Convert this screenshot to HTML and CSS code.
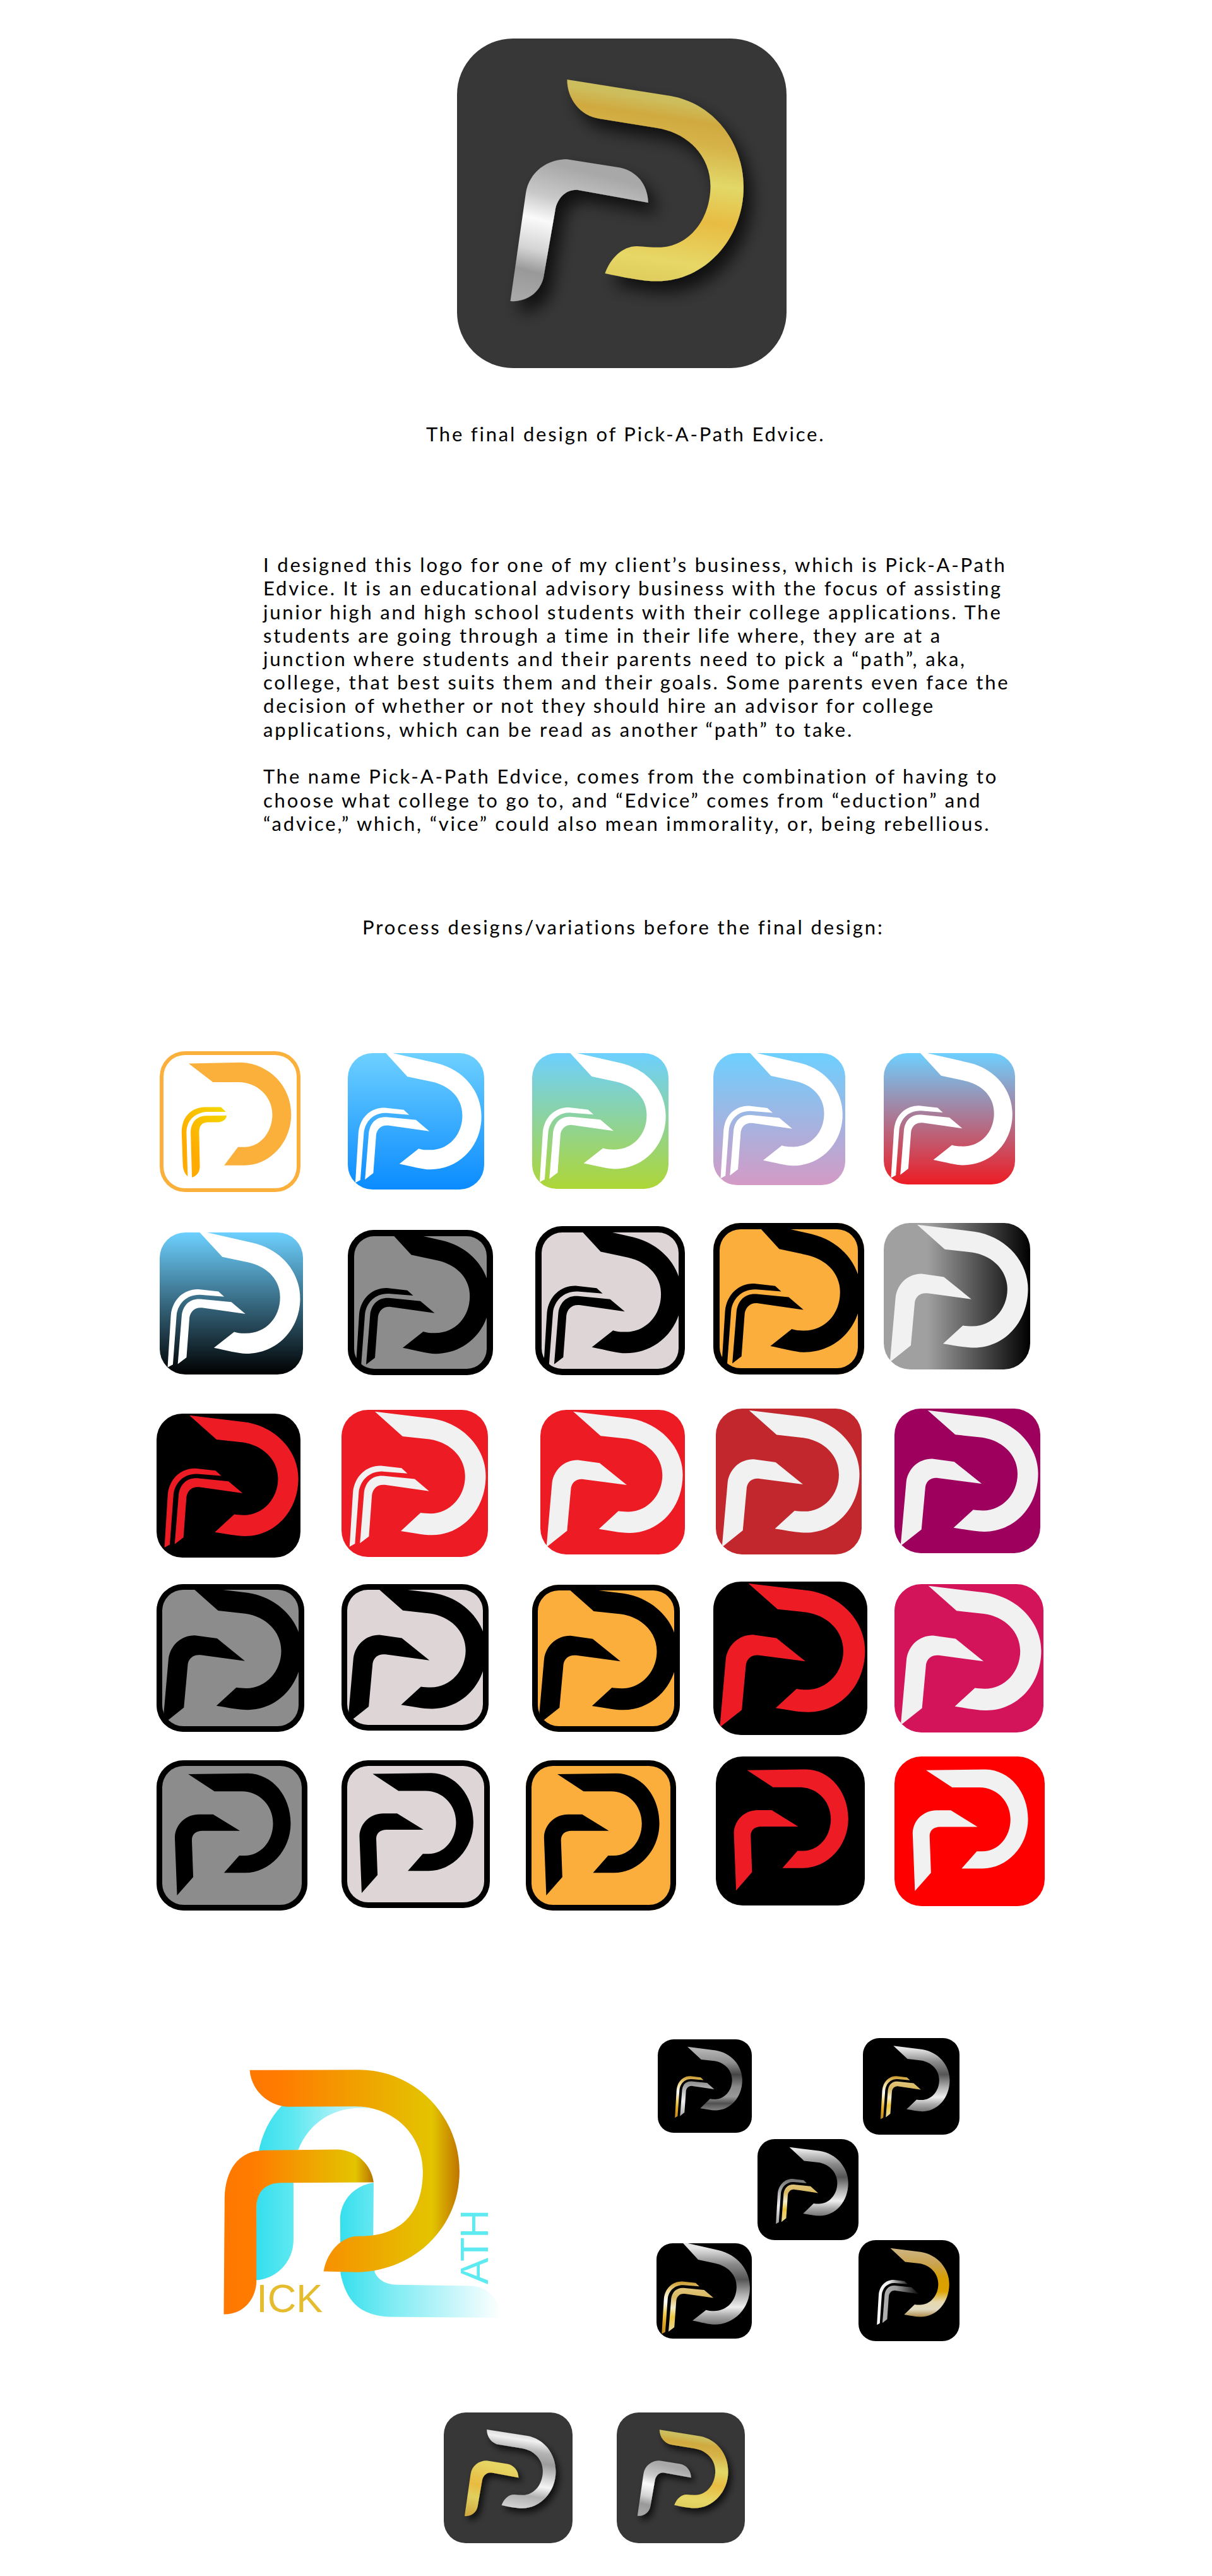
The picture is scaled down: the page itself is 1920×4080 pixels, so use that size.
FILE: index.html
```html
<!DOCTYPE html>
<html lang="en">
<head>
<meta charset="utf-8">
<title>Pick-A-Path Edvice</title>
<link rel="stylesheet" href="styles.css">
</head>
<body>
<svg class="defs" aria-hidden="true">
  <defs>
    <path id="mD" d="M571 250 L1000 318 C1180 350 1302 510 1302 695 C1302 910 1140 1085 945 1085 C880 1085 800 1068 728 1053 C750 990 800 940 860 940 C890 942 920 945 950 945 C1075 945 1165 830 1165 690 C1165 570 1075 470 940 450 L705 412 C625 400 571 330 571 250 Z"/>
    <path id="mR" d="M336 1168 L400 720 C415 630 490 580 570 580 L790 615 C860 630 905 685 907 760 L620 708 C570 700 530 740 522 790 L475 1060 C465 1125 410 1172 336 1168 Z"/>
    <path id="dA" d="M27 -1 L33 0 L65 7.3 C85 12 98 28 98 46.5 C98 68 82 85.3 60.3 85.3 C55 85.3 47 83 37.8 81.2 L52 70 C55 71 57 71 60.3 71 C74 71 84 60 84 45.7 C84 33 75 24 61.5 21 L43.7 17.2 Z"/>
    <path id="sA" d="M5.5 95 L7.8 58 C9 47 17 39.8 27 40 L41 41.6 L45 45.2 L28.4 43.9 C19 43.5 12.8 50 11.8 58 L9.2 93 Z M12.6 92.7 L15.4 58 C16.5 51 21 46.5 28.4 46.9 L50 49 L59.8 57.3 L29.6 53 C24 52.5 21.5 56 20.8 59.7 L18.7 88 Z"/>
    <path id="sO" d="M5.5 95 L7.8 58 C9 47 17 39.8 27 40 L41 41.6 L45 45.2 L28.4 43.9 C19 43.5 12.8 50 11.8 58 L9.2 93 Z"/>
    <path id="sI" d="M12.6 92.7 L15.4 58 C16.5 51 21 46.5 28.4 46.9 L50 49 L59.8 57.3 L29.6 53 C24 52.5 21.5 56 20.8 59.7 L18.7 88 Z"/>
    <path id="dC" d="M22.8 1.2 L61.8 5.9 C83 9 98.5 26 98.5 45 C98.5 68 82 85.1 61.8 85.1 C55 85.1 48 83.5 40.5 82.4 L54 70 C56 70.3 58 70.5 60.8 70.5 C74 70.5 84.4 59 84.4 45.2 C84.4 32 74 22 60 20 L41.7 18 Z"/>
    <path id="rC" d="M4.2 95 L8.1 50.4 C9.5 41 17 34.5 26 34.7 L41 36.8 L59.8 52 L29.8 48 C25 47.5 22 50 21.2 54 L18.5 83.6 Z"/>
    <path id="dD" d="M21 9.2 L60.5 8.7 C77 9 88.9 24 88.9 42 C88.9 60 75 74.9 58.6 74.9 L44.7 74.9 L54.8 63.4 L58.6 63.4 C69 63.4 77.2 54 77.2 42 C77.2 30 68 20.7 56.7 20.7 L38.4 20.7 Z"/>
    <path id="rD" d="M13.6 89.9 L12.1 51.3 C12.5 42 20 36 28 36 L37.5 36 L55.3 47 L30.3 47 C26.5 47 23.5 49 23.4 53 L24.3 77.7 Z"/>
    <path id="dO" d="M20.6 8.8 L58 8 C78 9 93.4 25 93.4 44.8 C93.4 65 78 81 60.6 81 L45.8 81 L55.6 68 L60.6 68 C71 68 80 58 80 44.8 C80 32 69 22 56 22 L37.8 22 Z"/>
    <path id="sS" d="M19.9 89 C17 86 16.5 83 16.4 80 L15.6 57.6 C15.6 47 22 39.7 33 39.7 L43.5 39.7 L47 43 L33 43 C24 44 19 50 19 57.6 L19.9 89 Z M22.9 89.6 C26 89 28.5 86 28.5 82 L28 57.6 C28 53 30 50.4 34.3 50.4 L41 50.4 C45 50.4 47.5 48 47.5 45.6 L33 45.9 C26 46 22 51 22 57.6 Z"/>

    <linearGradient id="sYellow" gradientUnits="userSpaceOnUse" x1="48" y1="39" x2="16" y2="62">
      <stop offset="0" stop-color="#f2dc00"/><stop offset="1" stop-color="#ffab00"/>
    </linearGradient>
    <linearGradient id="gGold" gradientUnits="userSpaceOnUse" x1="1000" y1="250" x2="877" y2="1068">
      <stop offset="0" stop-color="#cbc163"/><stop offset=".11" stop-color="#cdbd5c"/><stop offset=".19" stop-color="#d0aa40"/><stop offset=".3" stop-color="#d6b349"/><stop offset=".49" stop-color="#e2d868"/><stop offset=".68" stop-color="#e8bc42"/><stop offset=".9" stop-color="#e6d767"/><stop offset="1" stop-color="#e0cf5f"/>
    </linearGradient>
    <linearGradient id="gSilverR" gradientUnits="userSpaceOnUse" x1="450" y1="580" x2="311" y2="1135">
      <stop offset="0" stop-color="#a8a8a8"/><stop offset=".24" stop-color="#c8c8c8"/><stop offset=".42" stop-color="#fafafa"/><stop offset=".64" stop-color="#d4d4d4"/><stop offset=".8" stop-color="#999"/><stop offset="1" stop-color="#a8a8a8"/>
    </linearGradient>
    <linearGradient id="gSilverD" gradientUnits="userSpaceOnUse" x1="1000" y1="250" x2="877" y2="1068">
      <stop offset="0" stop-color="#c8c8c8"/><stop offset=".14" stop-color="#f0f0f0"/><stop offset=".27" stop-color="#b4b4b4"/><stop offset=".41" stop-color="#9c9c9c"/><stop offset=".7" stop-color="#f5f5f5"/><stop offset=".84" stop-color="#b0b0b0"/><stop offset="1" stop-color="#d0d0d0"/>
    </linearGradient>
    <linearGradient id="gGoldR" gradientUnits="userSpaceOnUse" x1="450" y1="580" x2="311" y2="1135">
      <stop offset="0" stop-color="#e6d564"/><stop offset=".42" stop-color="#e8bb40"/><stop offset=".66" stop-color="#e0d060"/><stop offset="1" stop-color="#d0a93f"/>
    </linearGradient>
    <filter id="sh" filterUnits="userSpaceOnUse" x="115" y="80" width="1365" height="1365">
      <feDropShadow dx="34" dy="46" stdDeviation="34" flood-color="#000" flood-opacity=".72"/>
    </filter>

    <linearGradient id="mLight" gradientUnits="userSpaceOnUse" x1="0" y1="0" x2="0" y2="100">
      <stop offset=".05" stop-color="#e6e6e6"/><stop offset=".22" stop-color="#8a8a8a"/><stop offset=".38" stop-color="#555"/><stop offset=".54" stop-color="#b0b0b0"/><stop offset=".67" stop-color="#eee"/><stop offset=".76" stop-color="#aaa"/><stop offset=".86" stop-color="#707070"/>
    </linearGradient>
    <linearGradient id="mDark" gradientUnits="userSpaceOnUse" x1="0" y1="0" x2="0" y2="100">
      <stop offset=".05" stop-color="#b4b4b4"/><stop offset=".22" stop-color="#8f8f8f"/><stop offset=".38" stop-color="#444"/><stop offset=".54" stop-color="#8a8a8a"/><stop offset=".67" stop-color="#999"/><stop offset=".76" stop-color="#505050"/><stop offset=".86" stop-color="#888"/>
    </linearGradient>
    <linearGradient id="mAmber" gradientUnits="userSpaceOnUse" x1="0" y1="0" x2="0" y2="100">
      <stop offset=".05" stop-color="#cdb27a"/><stop offset=".22" stop-color="#c9a24c"/><stop offset=".38" stop-color="#d99e00"/><stop offset=".54" stop-color="#dca200"/><stop offset=".67" stop-color="#e6d9b0"/><stop offset=".76" stop-color="#e2dac0"/><stop offset=".86" stop-color="#a88440"/>
    </linearGradient>
    <linearGradient id="sGold" gradientUnits="userSpaceOnUse" x1="0" y1="40" x2="0" y2="95">
      <stop offset="0" stop-color="#c8982a"/><stop offset=".18" stop-color="#f0d890"/><stop offset=".38" stop-color="#fff"/><stop offset=".6" stop-color="#f2d060"/><stop offset=".78" stop-color="#e0a820"/><stop offset="1" stop-color="#c08820"/>
    </linearGradient>
    <linearGradient id="sPale" gradientUnits="userSpaceOnUse" x1="0" y1="40" x2="0" y2="95">
      <stop offset="0" stop-color="#e6cf90"/><stop offset=".3" stop-color="#d9b860"/><stop offset=".5" stop-color="#f5eecc"/><stop offset=".68" stop-color="#efc840"/><stop offset="1" stop-color="#e8dcb0"/>
    </linearGradient>
    <linearGradient id="sGray" gradientUnits="userSpaceOnUse" x1="0" y1="40" x2="0" y2="95">
      <stop offset="0" stop-color="#707070"/><stop offset=".4" stop-color="#c8c8c8"/><stop offset=".6" stop-color="#f0f0f0"/><stop offset="1" stop-color="#a0a0a0"/>
    </linearGradient>
    <linearGradient id="sFadeA" gradientUnits="userSpaceOnUse" x1="5" y1="0" x2="45" y2="0">
      <stop offset="0" stop-color="#fff"/><stop offset=".4" stop-color="#eee"/><stop offset="1" stop-color="#222"/>
    </linearGradient>
    <linearGradient id="sFadeB" gradientUnits="userSpaceOnUse" x1="12" y1="0" x2="60" y2="0">
      <stop offset="0" stop-color="#b4b4b4"/><stop offset=".4" stop-color="#999"/><stop offset="1" stop-color="#000"/>
    </linearGradient>

    <linearGradient id="bigD" gradientUnits="userSpaceOnUse" x1="228" y1="0" x2="1230" y2="0">
      <stop offset="0" stop-color="#ff7800"/><stop offset=".15" stop-color="#ff7c00"/><stop offset=".87" stop-color="#e3c400"/><stop offset="1" stop-color="#bf7400"/>
    </linearGradient>
    <linearGradient id="bigR" gradientUnits="userSpaceOnUse" x1="104" y1="0" x2="820" y2="0">
      <stop offset="0" stop-color="#ff7800"/><stop offset=".2" stop-color="#ff7c00"/><stop offset=".88" stop-color="#e3c400"/><stop offset="1" stop-color="#b87000"/>
    </linearGradient>
    <linearGradient id="bigC1" gradientUnits="userSpaceOnUse" x1="260" y1="0" x2="900" y2="0">
      <stop offset="0" stop-color="#35dfee"/><stop offset=".27" stop-color="#5ee8f1"/><stop offset=".6" stop-color="#a8f1f7"/><stop offset="1" stop-color="#e8fbfd"/>
    </linearGradient>
    <linearGradient id="bigC2" gradientUnits="userSpaceOnUse" x1="660" y1="0" x2="1430" y2="0">
      <stop offset="0" stop-color="#35dfee"/><stop offset=".3" stop-color="#7aebf3"/><stop offset="1" stop-color="#fff"/>
    </linearGradient>
  </defs>
</svg>

<main class="page">
  <section class="hero">
    <svg class="metal m-main" viewBox="115 80 1365 1365">
      <use href="#mD" fill="url(#gGold)" filter="url(#sh)"/>
      <use href="#mR" fill="url(#gSilverR)" filter="url(#sh)"/>
    </svg>
  </section>

  <p class="line caption">The final design of Pick-A-Path Edvice.</p>

  <section class="story">
    <p class="para">
      <span class="line">I designed this logo for one of my client’s business, which is Pick-A-Path</span>
      <span class="line">Edvice. It is an educational advisory business with the focus of assisting</span>
      <span class="line">junior high and high school students with their college applications. The</span>
      <span class="line">students are going through a time in their life where, they are at a</span>
      <span class="line">junction where students and their parents need to pick a “path”, aka,</span>
      <span class="line">college, that best suits them and their goals. Some parents even face the</span>
      <span class="line">decision of whether or not they should hire an advisor for college</span>
      <span class="line">applications, which can be read as another “path” to take.</span>
    </p>
    <p class="para para-2">
      <span class="line">The name Pick-A-Path Edvice, comes from the combination of having to</span>
      <span class="line">choose what college to go to, and “Edvice” comes from “eduction” and</span>
      <span class="line">“advice,” which, “vice” could also mean immorality, or, being rebellious.</span>
    </p>
  </section>

  <p class="line process">Process designs/variations before the final design:</p>

  <section class="gallery">
    <div class="row row-1">
      <svg class="icon a11 bg-ring" viewBox="0 0 100 100" preserveAspectRatio="none"><use href="#dO" class="f-amber"/><use href="#sS" fill="url(#sYellow)"/></svg>
      <svg class="icon a12 bg-blue" viewBox="0 0 100 100" preserveAspectRatio="none"><use href="#dA" class="f-white"/><use href="#sA" class="f-white"/></svg>
      <svg class="icon a13 bg-green" viewBox="0 0 100 100" preserveAspectRatio="none"><use href="#dA" class="f-white"/><use href="#sA" class="f-white"/></svg>
      <svg class="icon a14 bg-lilac" viewBox="0 0 100 100" preserveAspectRatio="none"><use href="#dA" class="f-white"/><use href="#sA" class="f-white"/></svg>
      <svg class="icon a15 bg-sunset" viewBox="0 0 100 100" preserveAspectRatio="none"><use href="#dA" class="f-white"/><use href="#sA" class="f-white"/></svg>
    </div>
    <div class="row row-2">
      <svg class="icon a21 bg-night" viewBox="0 0 100 100" preserveAspectRatio="none"><use href="#dA" class="f-white"/><use href="#sA" class="f-white"/></svg>
      <svg class="icon a22 bg-gray ring-10" viewBox="0 0 100 100" preserveAspectRatio="none"><use href="#dA" class="f-black"/><use href="#sA" class="f-black"/></svg>
      <svg class="icon a23 bg-stone ring-10" viewBox="0 0 100 100" preserveAspectRatio="none"><use href="#dA" class="f-black"/><use href="#sA" class="f-black"/></svg>
      <svg class="icon a24 bg-orange ring-10" viewBox="0 0 100 100" preserveAspectRatio="none"><use href="#dA" class="f-black"/><use href="#sA" class="f-black"/></svg>
      <svg class="icon a25 bg-fade" viewBox="0 0 100 100" preserveAspectRatio="none"><use href="#dC" class="f-soft"/><use href="#rC" class="f-soft"/></svg>
    </div>
    <div class="row row-3">
      <svg class="icon a31 bg-black" viewBox="0 0 100 100" preserveAspectRatio="none"><use href="#dC" class="f-red"/><use href="#sA" y="-2" class="f-red"/></svg>
      <svg class="icon a32 bg-red" viewBox="0 0 100 100" preserveAspectRatio="none"><use href="#dC" class="f-soft"/><use href="#sA" y="-2" class="f-soft"/></svg>
      <svg class="icon a33 bg-red" viewBox="0 0 100 100" preserveAspectRatio="none"><use href="#dC" class="f-soft"/><use href="#rC" class="f-soft"/></svg>
      <svg class="icon a34 bg-brick" viewBox="0 0 100 100" preserveAspectRatio="none"><use href="#dC" class="f-soft"/><use href="#rC" class="f-soft"/></svg>
      <svg class="icon a35 bg-plum" viewBox="0 0 100 100" preserveAspectRatio="none"><use href="#dC" class="f-soft"/><use href="#rC" class="f-soft"/></svg>
    </div>
    <div class="row row-4">
      <svg class="icon a41 bg-gray ring-9" viewBox="0 0 100 100" preserveAspectRatio="none"><use href="#dC" class="f-black"/><use href="#rC" class="f-black"/></svg>
      <svg class="icon a42 bg-stone ring-9" viewBox="0 0 100 100" preserveAspectRatio="none"><use href="#dC" class="f-black"/><use href="#rC" class="f-black"/></svg>
      <svg class="icon a43 bg-orange ring-9" viewBox="0 0 100 100" preserveAspectRatio="none"><use href="#dC" class="f-black"/><use href="#rC" class="f-black"/></svg>
      <svg class="icon a44 bg-black" viewBox="0 0 100 100" preserveAspectRatio="none"><use href="#dC" class="f-red"/><use href="#rC" class="f-red"/></svg>
      <svg class="icon a45 bg-rose" viewBox="0 0 100 100" preserveAspectRatio="none"><use href="#dC" class="f-soft"/><use href="#rC" class="f-soft"/></svg>
    </div>
    <div class="row row-5">
      <svg class="icon a51 bg-gray ring-9" viewBox="0 0 100 100" preserveAspectRatio="none"><use href="#dD" class="f-black"/><use href="#rD" class="f-black"/></svg>
      <svg class="icon a52 bg-stone ring-9" viewBox="0 0 100 100" preserveAspectRatio="none"><use href="#dD" class="f-black"/><use href="#rD" class="f-black"/></svg>
      <svg class="icon a53 bg-orange ring-9" viewBox="0 0 100 100" preserveAspectRatio="none"><use href="#dD" class="f-black"/><use href="#rD" class="f-black"/></svg>
      <svg class="icon a54 bg-black" viewBox="0 0 100 100" preserveAspectRatio="none"><use href="#dD" class="f-red"/><use href="#rD" class="f-red"/></svg>
      <svg class="icon a55 bg-pure" viewBox="0 0 100 100" preserveAspectRatio="none"><use href="#dD" class="f-soft"/><use href="#rD" class="f-soft"/></svg>
    </div>
  </section>

  <section class="lower">
    <svg class="woven" viewBox="0 0 1568 1387">
      <path fill="url(#bigC1)" d="M380 288 C325 345 285 425 270 510 L260 760 L258 1120 C350 1115 435 1040 437 930 L437 655 L437 500 L460 497 C510 370 620 300 750 298 C800 298 850 305 900 315 L740 288 Z"/>
      <path fill="url(#bigC2)" d="M820 655 C730 665 660 740 660 830 L662 1090 C690 1220 750 1285 890 1295 L1430 1300 C1425 1210 1360 1150 1290 1147 L930 1142 C870 1140 835 1110 825 1080 L818 905 Z"/>
      <path fill="url(#bigR)" d="M104 1283 L108 730 C110 600 170 500 300 500 L650 496 C740 500 810 570 820 653 L380 655 C300 655 262 700 260 770 L260 1130 C255 1220 190 1285 104 1283 Z"/>
      <path fill="url(#bigD)" d="M228 117 L750 115 C1020 115 1230 340 1230 600 C1230 870 1010 1082 730 1082 L581 1078 C595 990 660 915 740 910 C960 915 1055 790 1055 600 C1055 430 920 290 730 290 L410 292 C310 285 235 210 228 117 Z"/>
      <text class="word word-ick" x="260" y="1272">ICK</text>
      <text class="word word-ath" transform="translate(1365 1140) rotate(-90)">ATH</text>
    </svg>
    <div class="cluster">
      <div class="c-row c-row-1">
        <svg class="tile t-a" viewBox="0 0 100 100" preserveAspectRatio="none"><g transform="translate(14 7) scale(.77 .81)"><use href="#dC" fill="url(#mDark)"/><use href="#sO" fill="url(#sGold)"/><use href="#sI" fill="url(#sGray)"/></g></svg>
        <svg class="tile t-b" viewBox="0 0 100 100" preserveAspectRatio="none"><g transform="translate(14 7) scale(.77 .81)"><use href="#dC" fill="url(#mLight)"/><use href="#sO" fill="url(#sGold)"/><use href="#sI" fill="url(#sPale)"/></g></svg>
      </div>
      <div class="c-row c-row-2">
        <svg class="tile t-c" viewBox="0 0 100 100" preserveAspectRatio="none"><g transform="translate(14 7) scale(.77 .81)"><use href="#dC" fill="url(#mLight)"/><use href="#sO" fill="url(#sGray)"/><use href="#sI" fill="url(#sPale)"/></g></svg>
      </div>
      <div class="c-row c-row-3">
        <svg class="tile t-d" viewBox="0 0 100 100" preserveAspectRatio="none"><use href="#dA" fill="url(#mLight)"/><use href="#sO" fill="url(#sGold)"/><use href="#sI" fill="url(#sPale)"/></svg>
        <svg class="tile t-e" viewBox="0 0 100 100" preserveAspectRatio="none"><g transform="translate(14 7) scale(.77 .81)"><use href="#dC" fill="url(#mAmber)"/><use href="#sO" fill="url(#sFadeA)"/><use href="#sI" fill="url(#sFadeB)"/></g></svg>
      </div>
    </div>
  </section>

  <section class="finals">
    <svg class="metal m-f" viewBox="115 80 1365 1365">
      <use href="#mD" fill="url(#gSilverD)" filter="url(#sh)"/>
      <use href="#mR" fill="url(#gGoldR)" filter="url(#sh)"/>
    </svg>
    <svg class="metal m-g" viewBox="115 80 1365 1365">
      <use href="#mD" fill="url(#gGold)" filter="url(#sh)"/>
      <use href="#mR" fill="url(#gSilverR)" filter="url(#sh)"/>
    </svg>
  </section>
</main>
</body>
</html>
```

FILE: styles.css
```css
* { box-sizing: border-box; }
html, body { margin: 0; padding: 0; background: #fff; }
body { font-family: "Lato", "Open Sans", sans-serif; color: #000; }
.defs { display: block; width: 0; height: 0; }
.page { width: 1920px; height: 4080px; overflow: hidden; }

/* hero */
.hero { padding: 61px 0 0 724px; }
.metal { display: block; background: #373737; border-radius: 17%; }
.m-main { width: 522px; height: 522px; }

/* text */
.line {
  display: block;
  margin: 0;
  font-size: 31px;
  line-height: 37.2px;
  letter-spacing: 2.8px;
  white-space: nowrap;
}
.caption { margin: 86px 0 0 675px; }
.story { margin: 170px 0 0 417px; }
.para { margin: 0; }
.para-2 { margin-top: 37.6px; }
.process { margin: 127px 0 0 574px; letter-spacing: 2.9px; }

/* gallery */
.gallery { margin-top: 178px; }
.row { display: flex; align-items: flex-start; padding-left: 248px; }
.row-2 { margin-top: 49px; }
.row-3 { margin-top: 53px; }
.row-4 { margin-top: 38px; }
.row-5 { margin-top: 34px; }
.icon { display: block; flex: none; overflow: hidden; border-radius: 18%; }

.a11 { width: 223px; height: 223px; margin-left: 5px; }
.a12 { width: 216px; height: 216px; margin: 3px 0 0 75px; }
.a13 { width: 216px; height: 215px; margin: 3px 0 0 76px; }
.a14 { width: 209px; height: 209px; margin: 3px 0 0 71px; }
.a15 { width: 208px; height: 208px; margin: 3px 0 0 61px; }

.a21 { width: 227px; height: 225px; margin: 15px 0 0 5px; }
.a22 { width: 230px; height: 230px; margin: 11px 0 0 71px; }
.a23 { width: 237px; height: 236px; margin: 5px 0 0 67px; }
.a24 { width: 239px; height: 240px; margin-left: 45px; }
.a25 { width: 232px; height: 232px; margin-left: 31px; }

.a31 { width: 228px; height: 228px; margin-top: 8px; }
.a32 { width: 232px; height: 233px; margin: 2px 0 0 65px; }
.a33 { width: 229px; height: 229px; margin: 2px 0 0 83px; }
.a34 { width: 231px; height: 231px; margin-left: 49px; }
.a35 { width: 231px; height: 229px; margin-left: 52px; }

.a41 { width: 234px; height: 234px; margin-top: 4px; }
.a42 { width: 233px; height: 232px; margin: 4px 0 0 59px; }
.a43 { width: 234px; height: 233px; margin: 5px 0 0 69px; }
.a44 { width: 244px; height: 243px; margin-left: 53px; }
.a45 { width: 236px; height: 235px; margin: 4px 0 0 43px; }

.a51 { width: 239px; height: 238px; margin-top: 6px; }
.a52 { width: 235px; height: 234px; margin: 6px 0 0 54px; }
.a53 { width: 238px; height: 238px; margin: 6px 0 0 57px; }
.a54 { width: 236px; height: 236px; margin-left: 63px; }
.a55 { width: 238px; height: 237px; margin-left: 47px; }

.bg-ring { background: #fff; box-shadow: inset 0 0 0 6px #fbb03b; }
.bg-blue { background: linear-gradient(#6dd0ff, #0a8bff); }
.bg-green { background: linear-gradient(#6dd0ff, #aed636); }
.bg-lilac { background: linear-gradient(#6dd0ff, #d49ac5); }
.bg-sunset { background: linear-gradient(#6dd0ff, #ed1c24); }
.bg-night { background: linear-gradient(#6dd0ff, #000); }
.bg-gray { background-color: #8c8c8c; }
.bg-stone { background-color: #ded6d6; }
.bg-orange { background-color: #fbae3c; }
.bg-fade { background: linear-gradient(90deg, #a0a0a0 30%, #000 100%); }
.bg-black { background: #000; }
.bg-red { background: #ed1c24; }
.bg-brick { background: #c1272d; }
.bg-plum { background: #9e005d; }
.bg-rose { background: #d4145a; }
.bg-pure { background: #f00; }
.ring-10 { box-shadow: inset 0 0 0 10px #000; }
.ring-9 { box-shadow: inset 0 0 0 9px #000; }

.f-white { fill: #fff; }
.f-soft { fill: #f1f1f1; }
.f-black { fill: #000; }
.f-red { fill: #ed1c24; }
.f-amber { fill: #fbb03b; }

/* lower */
.lower { display: flex; align-items: flex-start; margin-top: 202px; padding-left: 320px; }
.woven { display: block; flex: none; width: 520px; height: 460px; margin-top: 12px; }
.word { font-family: "Liberation Sans", Arial, sans-serif; font-size: 190px; }
.word-ick { fill: #e4bc2e; }
.word-ath { fill: #5eeaf1; letter-spacing: -4px; }

.cluster { margin-left: 200px; width: 480px; }
.c-row { display: flex; align-items: flex-start; }
.tile { display: block; flex: none; background: #000; border-radius: 17%; }
.c-row-1 .t-a { width: 149px; height: 148px; margin: 2px 0 0 2px; }
.c-row-1 .t-b { width: 153px; height: 153px; margin-left: 176px; }
.c-row-2 { margin-top: 7px; }
.t-c { width: 160px; height: 160px; margin-left: 160px; }
.c-row-3 { margin-top: 0; }
.t-d { width: 151px; height: 151px; margin-top: 5px; }
.t-e { width: 160px; height: 160px; margin-left: 169px; }

.finals { display: flex; margin-top: 113px; padding-left: 703px; }
.m-f { width: 204px; height: 207px; }
.m-g { width: 203px; height: 207px; margin-left: 70px; }
```
